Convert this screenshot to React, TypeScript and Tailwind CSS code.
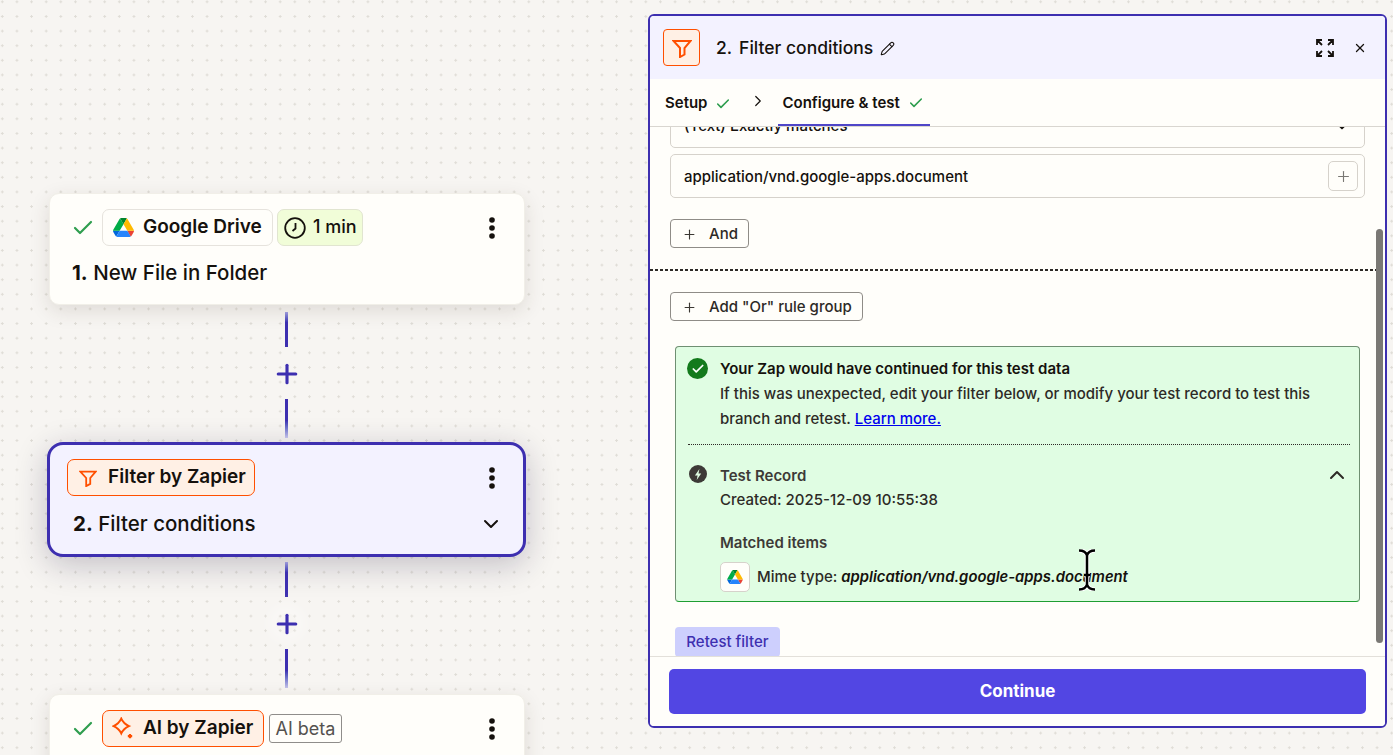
import { Check, ChevronDown, ChevronRight, ChevronUp, Pencil, Plus, X } from 'lucide-react';

const font = { fontFamily: 'Inter, sans-serif' };

function DriveIcon({ className }: { className: string }) {
  return (
    <svg viewBox="0 0 87.3 78" className={className}>
      <path d="m6.6 66.85 3.85 6.65c.8 1.4 1.95 2.5 3.3 3.3l13.75-23.8h-27.5c0 1.55.4 3.1 1.2 4.5z" fill="#0066da" />
      <path d="m43.65 25-13.75-23.8c-1.35.8-2.5 1.9-3.3 3.3l-25.4 44a9.06 9.06 0 0 0 -1.2 4.5h27.5z" fill="#00ac47" />
      <path d="m73.55 76.8c1.35-.8 2.5-1.9 3.3-3.3l1.6-2.75 7.65-13.25c.8-1.4 1.2-2.95 1.2-4.5h-27.502l5.852 11.5z" fill="#ea4335" />
      <path d="m43.65 25 13.75-23.8c-1.35-.8-2.9-1.2-4.5-1.2h-18.5c-1.6 0-3.15.45-4.5 1.2z" fill="#00832d" />
      <path d="m59.8 53h-32.3l-13.75 23.8c1.35.8 2.9 1.2 4.5 1.2h50.8c1.6 0 3.15-.45 4.5-1.2z" fill="#2684fc" />
      <path d="m73.4 26.5-12.7-22c-.8-1.4-1.95-2.5-3.3-3.3l-13.75 23.8 16.15 28h27.45c0-1.55-.4-3.1-1.2-4.5z" fill="#ffba00" />
    </svg>
  );
}

function FilterIcon({ className }: { className: string }) {
  return (
    <svg viewBox="0 0 20 20" fill="none" stroke="#ff4f00" strokeWidth="2" className={className}>
      <path d="M1.500 3H18.500L12.500 10V16.500L8 19V10Z" strokeLinejoin="miter" />
    </svg>
  );
}

function SparkIcon({ className }: { className: string }) {
  return (
    <svg viewBox="0 0 22 22" fill="none" stroke="#ff4f00" strokeWidth="1.800" className={className}>
      <path d="M8.500 1.500Q10.500 6 15.500 8.300 10.500 10.600 8.500 15 6.500 10.600 1.500 8.300 6.500 6 8.500 1.500Z" />
      <path d="M16.500 15.500v4M14.500 17.500h4" strokeWidth="2" />
    </svg>
  );
}

function ClockIcon() {
  return (
    <svg viewBox="0 0 22 22" fill="none" stroke="#15110d" strokeWidth="1.800" className="w-[22px] h-[22px]">
      <circle cx="11" cy="11" r="9.800" />
      <path d="M11.500 6v5.500L8.500 14" />
    </svg>
  );
}

function Dots() {
  return (
    <svg viewBox="0 0 6 22" fill="#15110d" className="w-[6px] h-[22px]">
      <circle cx="3" cy="3" r="2.800" />
      <circle cx="3" cy="11" r="2.800" />
      <circle cx="3" cy="19" r="2.800" />
    </svg>
  );
}

function ExpandIcon() {
  return (
    <svg viewBox="0 0 18 18" fill="none" stroke="#15110d" strokeWidth="1.800" className="w-[18px] h-[18px]">
      <path d="M1 6V1h5M1 1l5 5M12 1h5v5M17 1l-5 5M1 12v5h5M1 17l5-5M17 12v5h-5M17 17l-5-5" />
    </svg>
  );
}

function Connector({ halo }: { halo?: boolean }) {
  return (
    <div className="w-[21px] ml-[227px] flex flex-col items-center">
      <div className="w-[3px] h-[35px] bg-gradient-to-b from-[#9f9ad8] from-0% to-[#3d2fb0] to-30%" />
      <div className={`mt-[16px] mb-[15px] w-[21px] h-[21px] flex items-center justify-center ${halo ? 'shadow-[0_0_14px_8px_rgba(255,255,255,0.35)] rounded-full' : ''}`}>
        <Plus className="w-[30px] h-[30px] shrink-0 text-[#3d2fb0]" strokeWidth={2.500} absoluteStrokeWidth />
      </div>
      <div className="w-[3px] h-[39px] bg-gradient-to-b from-[#3d2fb0] from-55% to-[#c3c0e6]" />
    </div>
  );
}

function PanelCheck() {
  return <Check className="w-[16px] h-[16px] text-[#2f9e4f]" strokeWidth={2.400} />;
}

function OutlineButton({ label, width }: { label: string; width: string }) {
  return (
    <button className={`${width} h-[29px] rounded-[4px] border border-[#8f8c87] bg-[#fffefa] flex items-center pl-[11px] pt-[2px] text-[15px] font-medium text-[#2d2a26]`}>
      <Plus className="w-[15px] h-[15px] text-[#3b3833] mr-[12px]" strokeWidth={1.800} />
      {label}
    </button>
  );
}

export default function App() {
  return (
    <div style={font} className="relative flex w-full h-[755px] overflow-hidden bg-[#f7f5f2] bg-[radial-gradient(#dfdcd6_1px,transparent_1.200px)] bg-[size:14.630px_14.630px] bg-[position:-5px_-5.500px] text-[#15110d]">
      <div className="w-[648px] shrink-0 pl-[47px] pt-[193px]">
        <div className="ml-[2px] w-[476px] h-[112px] rounded-[10px] bg-[#fffefa] border border-[#f1efe8] shadow-[0_6px_20px_rgba(60,50,30,0.13)] pl-[21px] pr-[29px] pt-[15px]">
          <div className="flex items-center">
            <Check className="w-[24px] h-[24px] text-[#2f9e4f] mr-[7px]" strokeWidth={2.200} />
            <div className="h-[37px] w-[171px] rounded-[7px] border border-[#e6e3dd] bg-[#fffefa] flex items-center pl-[10px] gap-[9px] text-[19px] font-semibold">
              <DriveIcon className="w-[21px] h-[19px]" />
              <span className="-mt-[1px]">Google Drive</span>
            </div>
            <div className="ml-[4px] h-[37px] w-[86px] rounded-[7px] border border-[#e1e5d0] bg-[#f1fdd8] flex items-center pl-[6px] gap-[7px] text-[18px] font-medium">
              <ClockIcon />
              <span className="-mt-[2px]">1 min</span>
            </div>
            <div className="ml-auto"><Dots /></div>
          </div>
          <div className="mt-[13px] ml-[1px] text-[20.500px] leading-[28px] font-medium"><span className="font-bold">1.</span> New File in Folder</div>
        </div>

        <div className="ml-[2px] mt-[7px]"><Connector /></div>

        <div className="mt-[4px] w-[479px] h-[115px] rounded-[16px] bg-[#f3f2ff] border-[3px] border-[#3d2fb0] shadow-[0_8px_32px_rgba(30,20,60,0.24)] pl-[17px] pr-[28px] pt-[14px]">
          <div className="flex items-center">
            <div className="h-[37px] w-[188px] rounded-[7px] border border-[#ff4f00] bg-[#fff0e5] flex items-center pl-[11px] gap-[11px] text-[19px] font-semibold">
              <FilterIcon className="w-[18px] h-[18px]" />
              <span className="-mt-[1px]">Filter by Zapier</span>
            </div>
            <div className="ml-auto"><Dots /></div>
          </div>
          <div className="flex items-center mt-[14px] pl-[6px]">
            <div className="text-[20.500px] leading-[28px] font-medium"><span className="font-bold">2.</span> Filter conditions</div>
            <ChevronDown className="ml-auto -mr-[8px] w-[24px] h-[24px]" strokeWidth={2} />
          </div>
        </div>

        <div className="ml-[2px] mt-[5px]"><Connector halo /></div>

        <div className="ml-[2px] mt-[6px] w-[476px] h-[112px] rounded-[10px] bg-[#fffefa] border border-[#f1efe8] shadow-[0_6px_20px_rgba(60,50,30,0.13)] pl-[21px] pr-[29px] pt-[15px]">
          <div className="flex items-center">
            <Check className="w-[24px] h-[24px] text-[#2f9e4f] mr-[7px]" strokeWidth={2.200} />
            <div className="h-[37px] w-[162px] rounded-[7px] border border-[#ff4f00] bg-[#fff0e5] flex items-center pl-[9px] gap-[7px] text-[19px] font-semibold">
              <SparkIcon className="w-[24px] h-[24px]" />
              <span className="-mt-[1px]">AI by Zapier</span>
            </div>
            <div className="ml-[5px] h-[29px] w-[73px] rounded-[3px] border border-[#8f8d8a] flex items-center justify-center text-[18px] text-[#55524f]">AI beta</div>
            <div className="ml-auto"><Dots /></div>
          </div>
        </div>
      </div>

      <div className="mt-[14px] w-[739px] h-[714px] flex flex-col rounded-[6px] border-2 border-[#3d2fb0] bg-[#fffefa] overflow-hidden relative">
        <div className="h-[63px] shrink-0 bg-[#f3f2ff] flex items-center pl-[13px] pr-[18px]">
          <div className="w-[37px] h-[37px] rounded-[4px] border border-[#ff4f00] bg-[#fff0e5] flex items-center justify-center">
            <FilterIcon className="w-[20px] h-[20px]" />
          </div>
          <div className="ml-[16px] mt-[1px] text-[17.500px] font-medium"><span className="mr-[7px]">2.</span>Filter conditions</div>
          <Pencil className="ml-[7px] mt-[1px] w-[15px] h-[15px]" strokeWidth={1.700} />
          <div className="ml-auto"><ExpandIcon /></div>
          <X className="ml-[19px] w-[14px] h-[14px]" strokeWidth={2.200} />
        </div>

        <div className="h-[48px] shrink-0 flex border-b border-[#d9d6d0] text-[15px] font-semibold bg-[#fffefa] z-10">
          <div className="flex items-center pl-[15px] pt-[2px] gap-[8px]">Setup <PanelCheck /></div>
          <ChevronRight className="ml-[18px] mt-[13px] w-[18px] h-[18px]" strokeWidth={1.600} />
          <div className="ml-[11px] w-[152px] h-[47px] border-b-2 border-[#4f46c8] flex items-center pl-[4px] pt-[3px] gap-[8px]">Configure &amp; test <PanelCheck /></div>
        </div>

        <div className="flex-1 overflow-hidden relative">
          <div className="-mt-[23px] pl-[20px] pr-[20px]">
            <div className="h-[44px] rounded-[5px] border border-[#d6d2cb] flex items-center justify-between pl-[13px] pr-[12px] text-[15px] font-medium">
              <span>(Text) Exactly matches</span>
              <ChevronDown className="w-[20px] h-[20px]" strokeWidth={2} />
            </div>
            <div className="mt-[6px] h-[44px] rounded-[5px] border border-[#d6d2cb] flex items-center justify-between pl-[13px] pr-[6px] text-[15px] font-medium">
              <span className="mt-[2px]">application/vnd.google-apps.document</span>
              <div className="w-[30px] h-[30px] rounded-[5px] border border-[#d6d2cb] flex items-center justify-center">
                <Plus className="w-[17px] h-[17px] text-[#7a7874]" strokeWidth={1.600} />
              </div>
            </div>
            <div className="mt-[21px]"><OutlineButton label="And" width="w-[79px]" /></div>
          </div>
          <div className="mt-[21px] h-[2px] bg-[repeating-linear-gradient(90deg,#2d2a26_0_3px,transparent_3px_5px)]" />
          <div className="pl-[20px] mt-[21px]"><OutlineButton label={'Add "Or" rule group'} width="w-[193px]" /></div>

          <div className="ml-[25px] mt-[25px] w-[685px] h-[256px] rounded-[4px] border border-[#6f8f72] border-b-[#1f9e32] bg-[#e0fde3] relative pl-[44px] pt-[12px] text-[15px] font-medium text-[#2d2a26]">
            <div className="absolute left-[11px] top-[11px] w-[21px] h-[21px] rounded-full bg-[#137a1c] flex items-center justify-center">
              <Check className="w-[14px] h-[14px] text-white" strokeWidth={3} />
            </div>
            <div className="leading-[20px] font-semibold text-[#15110d]">Your Zap would have continued for this test data</div>
            <div className="leading-[25px] mt-[2px]">
              If this was unexpected, edit your filter below, or modify your test record to test this<br />
              branch and retest. <a className="text-[#0000ee] underline font-medium">Learn more.</a>
            </div>
            <div className="absolute left-[12px] right-[9px] top-[97px] border-t border-dotted border-[#2d2a26]" />
            <div className="absolute left-[13px] top-[118px] w-[18px] h-[18px] rounded-full bg-[#3d3a37] flex items-center justify-center">
              <svg viewBox="0 0 10 12" className="w-[9px] h-[11px]" fill="#e0fde3"><path d="M6 0 1 7h3l-1 5 5-7H5z" /></svg>
            </div>
            <ChevronUp className="absolute right-[10px] top-[116px] w-[24px] h-[24px]" strokeWidth={2} />
            <div className="mt-[35px] leading-[20px] font-semibold text-[#3d3a37]">Test Record</div>
            <div className="mt-[4px] leading-[20px]">Created: 2025-12-09 10:55:38</div>
            <div className="mt-[23px] leading-[20px] font-semibold text-[#3d3a37]">Matched items</div>
            <div className="mt-[9px] flex items-center">
              <div className="w-[30px] h-[30px] rounded-[5px] border border-[#d6d2cb] bg-[#fffefa] flex items-center justify-center">
                <DriveIcon className="w-[16px] h-[14px]" />
              </div>
              <span className="ml-[7px] whitespace-nowrap">Mime type:</span>
              <span className="ml-[4px] w-[288px] overflow-hidden whitespace-nowrap italic font-semibold text-[14.800px] text-[#15110d]">application/vnd.google-apps.document</span>
            </div>
            <svg viewBox="0 0 18 42" fill="none" className="absolute left-[402px] top-[202px] w-[18px] h-[42px]">
              <path d="M1 1.500c4 0 7 1.500 8 5v29c-1 3.500-4 5-8 5M17 1.500c-4 0-7 1.500-8 5v29c1 3.500 4 5 8 5M6 26h6" stroke="#fff" strokeWidth="4.500" />
              <path d="M1 1.500c4 0 7 1.500 8 5v29c-1 3.500-4 5-8 5M17 1.500c-4 0-7 1.500-8 5v29c1 3.500 4 5 8 5M6 26h6" stroke="#000" strokeWidth="2.500" />
            </svg>
          </div>

          <div className="ml-[25px] mt-[25px] w-[105px] h-[30px] rounded-[4px] bg-[#cdcffd] flex items-center justify-center text-[15px] font-medium text-[#3d2fb0]">Retest filter</div>

          <div className="absolute right-[2px] top-[102px] w-[7px] h-[414px] rounded-full bg-[#7a7874]" />
        </div>

        <div className="h-[70px] shrink-0 border-t border-[#e3e0da] pl-[19px] pr-[19px] pt-[12px] bg-[#fffefa]">
          <button className="w-full h-[45px] rounded-[5px] bg-[#5246e3] text-white text-[17px] font-bold">Continue</button>
        </div>
      </div>
    </div>
  );
}
